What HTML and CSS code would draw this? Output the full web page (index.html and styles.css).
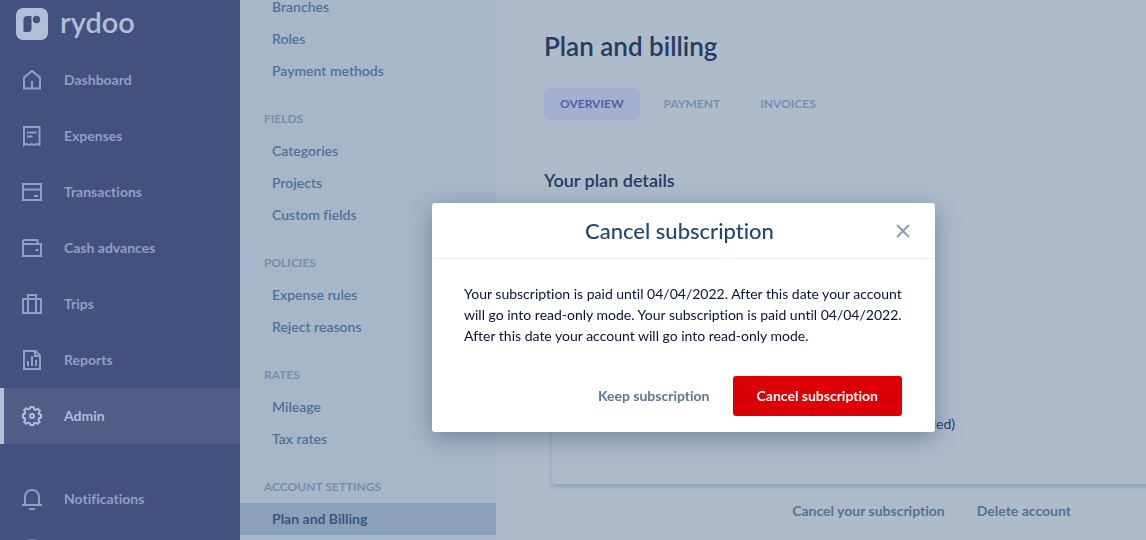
FILE: index.html
```html
<!DOCTYPE html>
<html lang="en">
<head>
    <meta charset="UTF-8">
    <meta name="viewport" content="width=device-width, initial-scale=1.0">
    <title>Plan and billing - Rydoo</title>
    <link rel="stylesheet" href="styles.css">
</head>
<body>
    <div class="app">
        <!-- Main sidebar -->
        <aside class="sidebar">
            <a class="brand" href="#">
                <svg width="32" height="32" viewBox="0 0 32 32">
                    <rect width="32" height="32" rx="7" fill="#afc0d8"/>
                    <path d="M11 8h4.500v12.500a3.500 3.500 0 0 1-3.500 3.500H7.500V11.500A3.500 3.500 0 0 1 11 8z" fill="#43517f"/>
                    <circle cx="20.500" cy="11.500" r="3.700" fill="#43517f"/>
                </svg>
                <span>rydoo</span>
            </a>
            <nav class="menu">
                <a href="#">
                    <svg viewBox="0 0 24 24"><path d="M4 20.500V9.500L12 3l8 6.500v11zM12 20v-7"/></svg>
                    <span>Dashboard</span>
                </a>
                <a href="#">
                    <svg viewBox="0 0 24 24"><path d="M4 3h15.500v18l-2.600-1-2.600 1-2.600-1-2.600 1-2.600-1L4 21zM7 8.500h9.500M7 12.500h5.500"/></svg>
                    <span>Expenses</span>
                </a>
                <a href="#">
                    <svg viewBox="0 0 24 24"><path d="M3 4h18v16H3zM3 9.500h18M14 16h4"/></svg>
                    <span>Transactions</span>
                </a>
                <a href="#">
                    <svg viewBox="0 0 24 24"><path d="M3 4h14.500v4M3 4v16h18V8H3M15.500 14h3"/></svg>
                    <span>Cash advances</span>
                </a>
                <a href="#">
                    <svg viewBox="0 0 24 24"><path d="M3 7h18v14H3zM8 21V3h8v18"/></svg>
                    <span>Trips</span>
                </a>
                <a href="#">
                    <svg viewBox="0 0 24 24"><path d="M4 3h11.500L20 7.500V21H4zM15 3v5h5M8 13v5M12 8v10M16 12v6"/></svg>
                    <span>Reports</span>
                </a>
                <a class="active" href="#">
                    <svg viewBox="0 0 24 24"><path d="M10.500 3h3l.8 2.400 1.200.5 2.300-1.100 2 2-1.100 2.300.5 1.200L21 10.500v3l-2 .8-.5 1.200 1.100 2.300-2 2-2.300-1.100-1.200.5-.6 1.800h-3l-.8-1.800-1.200-.5-2.300 1.100-2-2 1.100-2.300-.5-1.200L3 13.500v-3l1.800-.8.500-1.200-1.100-2.300 2-2 2.300 1.100 1.200-.5z"/><circle cx="12" cy="12" r="2"/></svg>
                    <span>Admin</span>
                </a>
            </nav>
            <nav class="menu">
                <a href="#">
                    <svg viewBox="0 0 24 24"><path d="M2 18h20M5 18v-8a7 7 0 0 1 14 0v8M9 22h6"/></svg>
                    <span>Notifications</span>
                </a>
                <a href="#" aria-label="Profile">
                    <svg class="avatar" viewBox="0 0 32 32"><circle cx="16" cy="16" r="16"/></svg>
                </a>
            </nav>
        </aside>

        <!-- Admin settings list -->
        <nav class="settings">
            <a href="#">Branches</a>
            <a href="#">Roles</a>
            <a href="#">Payment methods</a>
            <h4>FIELDS</h4>
            <a href="#">Categories</a>
            <a href="#">Projects</a>
            <a href="#">Custom fields</a>
            <h4>POLICIES</h4>
            <a href="#">Expense rules</a>
            <a href="#">Reject reasons</a>
            <h4>RATES</h4>
            <a href="#">Mileage</a>
            <a href="#">Tax rates</a>
            <h4>ACCOUNT SETTINGS</h4>
            <a class="active" href="#">Plan and Billing</a>
        </nav>

        <main class="content">
            <h1>Plan and billing</h1>
            <div class="tabs">
                <button class="active">OVERVIEW</button>
                <button>PAYMENT</button>
                <button>INVOICES</button>
            </div>
            <h2>Your plan details</h2>
            <section class="plan-card">
                <p>(VAT excluded)</p>
            </section>
            <div class="account-links">
                <a href="#">Cancel your subscription</a>
                <a href="#">Delete account</a>
            </div>
        </main>
    </div>

    <div class="overlay">
        <div class="modal" role="dialog" aria-labelledby="modalTitle">
            <header class="modal-header">
                <h3 id="modalTitle">Cancel subscription</h3>
                <button class="close" aria-label="Close">
                    <svg width="14" height="14" viewBox="0 0 14 14"><path d="M1 1l12 12M13 1L1 13"/></svg>
                </button>
            </header>
            <p class="modal-body">Your subscription is paid until 04/04/2022. After this date your account will go into read-only mode. Your subscription is paid until 04/04/2022. After this date your account will go into read-only mode.</p>
            <footer class="modal-footer">
                <button class="btn">Keep subscription</button>
                <button class="btn btn-danger">Cancel subscription</button>
            </footer>
        </div>
    </div>
</body>
</html>
```
FILE: styles.css
```css
* { box-sizing: border-box; }
body { margin: 0; font-family: Lato, "Liberation Sans", sans-serif; font-size: 14px; font-variant-ligatures: none; background-color: #aebbcb; }
h1, h2, h3, h4, p { margin: 0; }
a { text-decoration: none; color: inherit; }
button { border: none; background: none; padding: 0; font: inherit; font-variant-ligatures: none; color: inherit; cursor: pointer; }

.app { display: flex; height: 100vh; overflow: hidden; }

/* Sidebar */
.sidebar { flex: 0 0 240px; background-color: #43517f; color: #8e9fc5; overflow: hidden; }
.brand { display: flex; align-items: center; gap: 12px; height: 52px; padding: 0 16px 4px; color: #afc0d8; }
.brand span { font-size: 29px; font-weight: 600; line-height: 32px; padding-bottom: 4px; }
.menu { margin-bottom: 27px; }
.menu a { display: flex; align-items: center; gap: 20px; height: 56px; padding-left: 20px; font-weight: bold; }
.menu span { padding-bottom: 2px; }
.menu svg { width: 24px; height: 24px; fill: none; stroke: currentColor; stroke-width: 2; }
.menu svg.avatar { width: 32px; height: 32px; margin-left: -4px; fill: #7480b4; stroke: none; }
.menu a.active { background-color: #4f5d87; color: #afbedb; border-left: 4px solid #afc3d6; padding-left: 16px; }

/* Settings */
.settings { flex: 0 0 256px; background-color: #a7b7ca; color: #4f7195; margin-top: -9px; font-weight: 600; }
.settings a { display: block; line-height: 32px; padding-left: 32px; }
.settings h4 { margin-top: 16px; padding-left: 24px; font-size: 12px; line-height: 32px; color: #748fac; }
.settings a.active { background-color: #8ba1b9; color: #37587f; font-weight: bold; }

/* Content */
.content { flex: 1; padding: 28px 0 0 48px; color: #263c63; }
.content h1 { font-size: 26px; line-height: 36px; font-weight: 600; }
.tabs { display: flex; gap: 8px; margin-top: 24px; }
.tabs button { height: 32px; padding: 0 16px 2px; border-radius: 6px; font-size: 12px; font-weight: bold; color: #7590ae; }
.tabs button.active { background-color: #a4b0cf; color: #575da5; }
.content h2 { margin-top: 48px; font-size: 18px; line-height: 24px; font-weight: 600; }
.plan-card { margin: 24px -16px 0 8px; padding: 196px 0 48px; border-radius: 4px; box-shadow: -1px 4px 5px -1px #8fa2ba; background-color: #aebbcb; }
.plan-card p { width: 403px; line-height: 24px; text-align: right; }
.account-links { display: flex; justify-content: flex-end; gap: 32px; padding: 15px 75px 0 0; line-height: 24px; font-weight: bold; color: #547297; }

/* Modal */
.overlay { position: fixed; inset: 0; display: flex; justify-content: center; align-items: flex-start; padding: 203px 0 0 221px; }
.modal { width: 503px; background-color: #fff; border-radius: 3px; box-shadow: 0 6px 24px rgba(60, 80, 115, 0.5); }
.modal-header { display: flex; align-items: center; height: 56px; padding: 0 24px 0 32px; border-bottom: 1px solid #edf0f3; }
.modal-header h3 { flex: 1; text-align: center; font-size: 22px; font-weight: 500; color: #24476e; }
.close { width: 16px; height: 16px; display: flex; align-items: center; justify-content: center; }
.close svg { fill: none; stroke: #8d9ab8; stroke-width: 2; }
.modal-body { padding: 24px 32px 0; font-size: 14px; line-height: 21px; color: #0a1238; }
.modal-footer { display: flex; justify-content: flex-end; align-items: center; gap: 23px; padding: 30px 33px 16px; }
.btn { height: 40px; padding-bottom: 2px; border-radius: 3px; font-weight: bold; color: #5d7896; }
.btn-danger { padding: 0 24px 2px; background-color: #da0006; color: #fff; }
```
